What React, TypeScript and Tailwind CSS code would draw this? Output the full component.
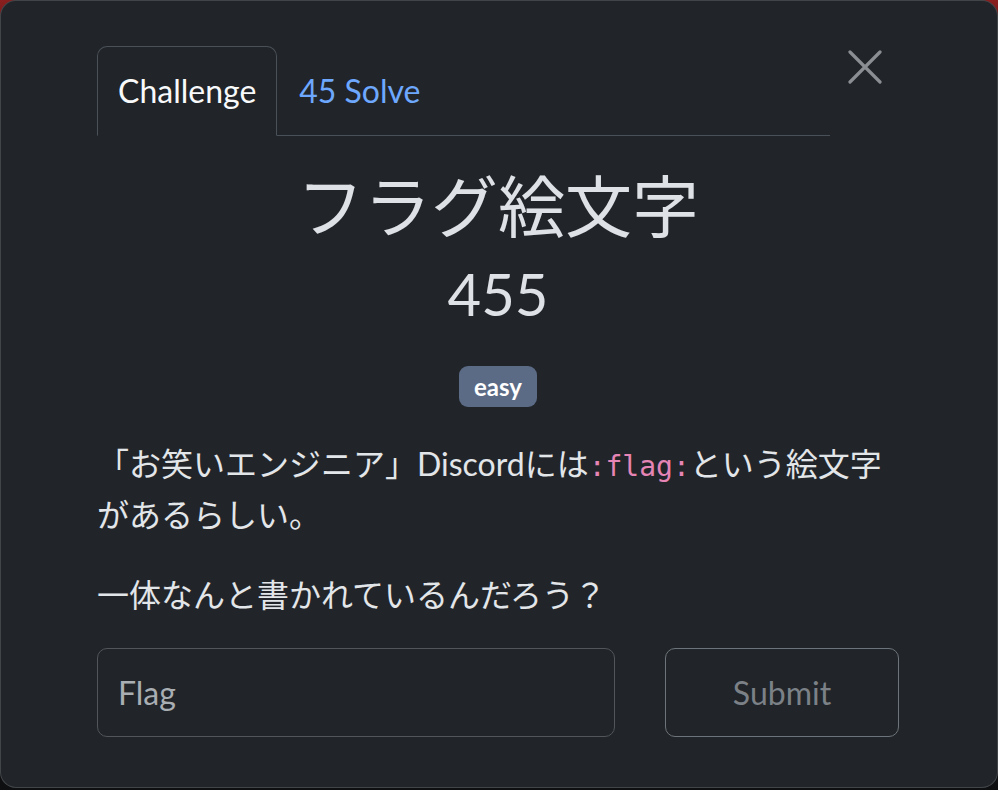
import { useState } from "react";

const latin = "font-['Lato','Noto_Sans_CJK_JP',sans-serif]";

export default function App() {
  const [tab, setTab] = useState("challenge");
  const [flag, setFlag] = useState("");

  return (
    <div className="h-[790px] w-[998px] overflow-hidden bg-[linear-gradient(to_bottom,#8a1f1f_0px,#7a1c1c_16px,#17181b_40px,#0e0f11_100%)]">
      {/* modal */}
      <div className={`h-[788px] w-[998px] rounded-[16px] border border-white/15 bg-[#212529] px-[96px] pt-[45px] text-[#dee2e6] ${latin}`}>
        {/* header: tabs + close */}
        <div className="flex items-start">
          <nav className="flex w-[733px] border-b border-[#495057]">
            <button
              onClick={() => setTab("challenge")}
              className="-mb-px rounded-t-[10px] border border-[#495057] border-b-[#212529] bg-[#212529] px-[20px] py-[20px] text-[32px] leading-[48px] text-[#f8f9fa]"
            >
              Challenge
            </button>
            <button
              onClick={() => setTab("solves")}
              className="px-[22px] py-[20px] text-[32px] leading-[48px] text-[#6ea8fe]"
            >
              45 Solve
            </button>
          </nav>
          <button aria-label="Close" className="ml-[18px] mt-[4px] flex h-[34px] w-[34px] items-center justify-center">
            <svg width="34" height="34" viewBox="0 0 34 34" fill="none" stroke="#8b8e93" strokeWidth="3.2" strokeLinecap="round">
              <path d="M2 2 L32 32 M32 2 L2 32" />
            </svg>
          </button>
        </div>

        {/* body */}
        <div data-tab={tab} className="w-[802px]">
          <h2 className="pt-[32px] text-center text-[67px] font-normal leading-[77px] font-['Lato','Noto_Sans_CJK_JP',sans-serif]">
            フラグ絵文字
          </h2>
          <h3 className="mt-[15px] text-center text-[58px] leading-[67px]">455</h3>

          <div className="mt-[39px] flex justify-center">
            <span className="rounded-[9px] bg-[#5b6b86] px-[15px] py-[8px] text-[24px] font-bold leading-[25px] text-white">
              easy
            </span>
          </div>

          <div className="mt-[33px] text-[32px] leading-[48px] text-[#e3e6e9]">
            <p className="mb-[32px]">
              「お笑いエンジニア」Discordには
              <code className="font-['DejaVu_Sans_Mono',monospace] text-[28px] text-[#e685b5]">:flag:</code>
              という絵文字
              <br />
              があるらしい。
            </p>
            <p className="mb-[29px]">一体なんと書かれているんだろう？</p>
          </div>

          <div className="flex gap-[50px]">
            <input
              value={flag}
              onChange={(e) => setFlag(e.target.value)}
              placeholder="Flag"
              className="h-[89px] w-[518px] rounded-[10px] border border-[#50565c] bg-[#212529] px-[20px] text-[32px] text-[#dee2e6] outline-none placeholder:text-[#a9aeb3]"
            />
            <button className="h-[89px] w-[234px] rounded-[10px] border border-[#6c737a] text-[32px] text-[#7b8187]">
              Submit
            </button>
          </div>
        </div>
      </div>
    </div>
  );
}
